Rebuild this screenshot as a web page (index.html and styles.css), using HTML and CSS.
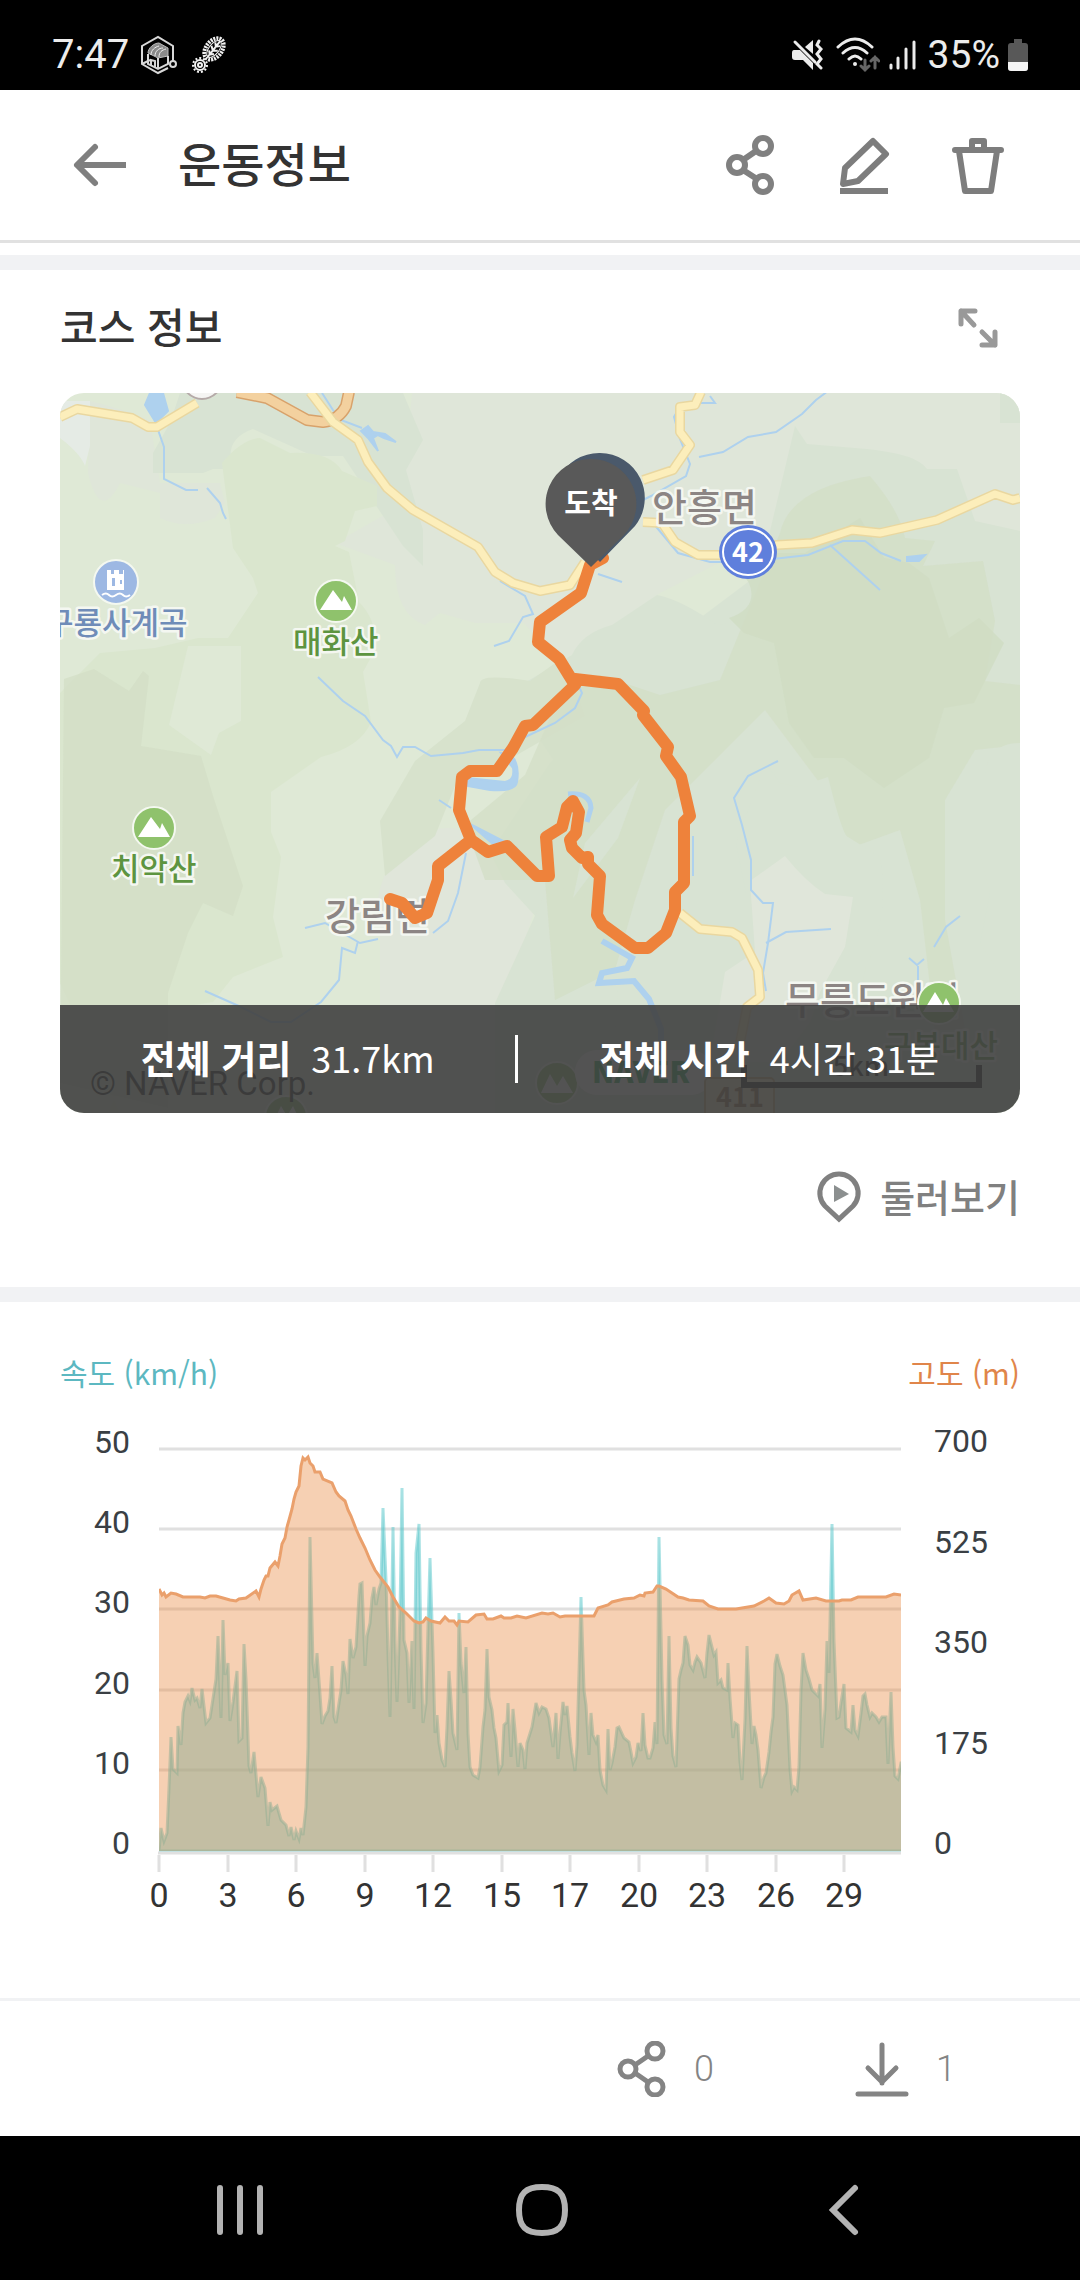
FILE: index.html
```html
<!DOCTYPE html>
<html lang="ko">
<head>
<meta charset="utf-8">
<meta name="viewport" content="width=device-width, initial-scale=1">
<title>운동정보</title>
<link rel="stylesheet" href="styles.css">
</head>
<body>
<div class="status-bar">
  <div class="status-group">
    <span class="clock">7:47</span>
    <svg class="status-app" width="38" height="40" viewBox="0 0 38 40" fill="none" stroke="#d8d8d8" stroke-width="2">
      <path d="M32 26V11L17 2 1 11v18l16 9 10-5M1 29l8-4"/>
      <path d="M7 18c0-5 6-10 11-10l9 5v8l-10 2z" fill="#8a8a8a" stroke="#bbb" stroke-width="1"/>
      <path d="M10 20c0-5 4-8 8-9M14 21c0-5 4-8 8-8M18 22c0-5 3-7 7-8" stroke="#eee" stroke-width="1"/>
      <path d="M7 19v10l10 5 10-5v-8M17 23v11M10 31v-6l4 1v6"/>
      <circle cx="32" cy="29" r="3"/>
    </svg>
    <svg class="status-app" width="38" height="40" viewBox="0 0 38 40" fill="none" stroke="#f2f2f2">
      <g transform="rotate(38 23 14)">
        <ellipse cx="23" cy="14" rx="5" ry="10" stroke-width="1"/>
        <path d="M23 4v20M20 8l3 3 3-3M19 13l4 3 4-3M20 18l3 3 3-3" stroke-width="2"/>
        <ellipse cx="23" cy="14" rx="8" ry="12" stroke-width="4" stroke-dasharray="2 1"/>
      </g>
      <circle cx="9" cy="30" r="5" stroke-width="2"/><circle cx="9" cy="30" r="7" stroke-width="2" stroke-dasharray="2 2"/><circle cx="9" cy="30" r="2" stroke-width="2"/>
    </svg>
  </div>
  <div class="status-group">
    <svg width="32" height="32" viewBox="0 0 32 32" fill="none">
      <path d="M2 11h6l13 13v7L11 21H3q-3 0-3-3v-4q0-3 2-3z" fill="#ececec"/><path d="M13 8l8-7v14z" fill="#ececec"/>
      <path d="M3 3l20 20" stroke="#ececec" stroke-width="3" stroke-linecap="round"/>
      <path d="M27 2l-2 4 4 4-4 5 4 5-4 5 4 4" stroke="#ececec" stroke-width="3" stroke-linecap="round"/>
    </svg>
    <svg class="wifi" width="44" height="36" viewBox="0 0 44 36" fill="none" stroke="#ececec" stroke-width="3" stroke-linecap="round">
      <path d="M2 10q17-16 34 0M7 16q12-11 24 0M13 22q6-6 12 0"/>
      <circle cx="19" cy="27" r="2" fill="#ececec" stroke="none"/>
      <path d="M29 23v10M25 29l4 4 4-4M39 31V20M35 24l4-4 4 4" stroke="#666"/>
    </svg>
    <svg width="28" height="32" viewBox="0 0 28 32" fill="none" stroke="#ececec" stroke-width="3" stroke-linecap="round">
      <path d="M3 26v3M10 19v10M18 10v19M26 3v26"/>
    </svg>
    <span class="battery-level">35%</span>
    <svg width="20" height="34" viewBox="0 0 20 34">
      <path d="M6 1h8v4h3q3 0 3 3v22q0 3-3 3H3q-3 0-3-3V8q0-3 3-3h3z" fill="#585858"/>
      <path d="M0 24h20v6q0 3-3 3H3q-3 0-3-3z" fill="#f4f4f4"/>
    </svg>
  </div>
</div>

<header class="app-bar">
  <button class="icon-button back" aria-label="뒤로">
    <svg width="56" height="56" viewBox="0 0 56 56" fill="none" stroke="#7f7f7f" stroke-width="6" stroke-linejoin="round"><path d="M54 28H5"/><path d="M23 10L5 28l18 18" stroke-linecap="round"/></svg>
  </button>
  <h1>운동정보</h1>
  <div class="actions">
    <button class="icon-button" aria-label="공유">
      <svg width="60" height="60" viewBox="0 0 60 60" fill="none" stroke="#808080" stroke-width="6"><circle cx="17" cy="30" r="8"/><circle cx="43" cy="11" r="8"/><circle cx="43" cy="49" r="8"/><path d="M23 25l13-9M23 35l14 9"/></svg>
    </button>
    <button class="icon-button" aria-label="편집">
      <svg width="60" height="60" viewBox="0 0 60 60" fill="none" stroke="#7d7d7d" stroke-width="6" stroke-linejoin="round"><path d="M39 6l13 13-28 27-15 3 2-16z"/><path d="M6 56h48"/></svg>
    </button>
    <button class="icon-button" aria-label="삭제">
      <svg width="60" height="60" viewBox="0 0 60 60" fill="none" stroke="#7d7d7d" stroke-width="6" stroke-linejoin="round" stroke-linecap="round"><path d="M7 15h46M11 16l6 40h26l6-40M24 14V6h12v8"/></svg>
    </button>
  </div>
</header>

<main>
  <section class="course">
    <div class="course-head">
      <h2>코스 정보</h2>
      <button class="icon-button" aria-label="지도 크게 보기">
        <svg width="44" height="44" viewBox="0 0 44 44" fill="none" stroke="#999" stroke-width="5" stroke-linecap="round" stroke-linejoin="round"><path d="M18 19L5 5M5 18V5h14"/><path d="M26 26l13 13M39 26v13H26"/></svg>
      </button>
    </div>

    <div class="map">
      <svg class="map-canvas" viewBox="0 0 960 720" role="img" aria-label="코스 지도">
        <rect width="960" height="720" fill="#dfe9d6"/>
        <g fill="#dfe6d9">
          <path d="M352 0h608v190Q860 150 735 130 640 180 600 200L500 270l-60-66-90-90-5-40z"/>
          <path d="M30 8q40 10 60 20l10 62h60l5 20-10 15q-30 12-55 0l0-25-40-10q-20 40-32-10z"/>
          <path d="M0 8h30v45l-5 20Q20 60 0 45z" fill="#e5ebe5"/>
          <path d="M345 110l90 60 40 60-60 0-35-10-15 12q-30-10-30-60l-60-22z"/>
          <path d="M320 540q-10-30 10-70 60-70 110 0l60-60-20 90-35 110v110H320z" fill="#e0e6da"/>
        </g>
        <g fill="#d8e3d3">
          <path d="M110 30L93 60v20h50l10-4h20q-10-30 20-40l60 27h30l60 90 20 20 0-36-17-60 17-30-20-47H120z"/>
          <path d="M735 33l12 18 60 5q50 5 60 20h30l18 52 45 10v582H540l-40-170-55-60-15-30 60-90 130-130 80-60z"/>
          <path d="M512 262q10-22 40-30l45-30q25 5 60 30 25-5 35-2l30 50-80 80-140 20-40-60-15-20z"/>
          <path d="M940 0h20v30h-20z"/>
          <path d="M435 720l0-110 55-120 70 30 0 200z"/>
        </g>
        <path d="M162 70q20-24 38-25l30 15q40-2 52 18l35 15v20l-22 5-10 30-10 5 14 6 10 50q20 20 15 50l-11 20 8 50q-10 25-50 35l-50 35v40l10 25-8 60 10 40-50 20-20 25-60 10-45 100H60L0 590V300l40-40 55-5 43-10h30l30-45-5-15-20-30z" fill="#dae6ce"/>
        <path d="M420 290q0-10 50-2l35-25 20 60-70 40-60 30-20 50-50 40-5-55 35-60 50-40z" fill="#d7e2cc"/>
        <path d="M128 253l53 0v75l-22 12-8 22-42-30z" fill="#dfe9d6"/>
        <g fill="#d3dfc7">
          <path d="M4 286l30-10 35 22 14-20 6 5-8 70 60 10 12 40 30 90-10 30-30-13-15 30-20 60v115L0 690z" opacity=".8"/>
          <path d="M720 140q10-45 90-57 30 35 35 62l30 3-12 25 60-5 12 60-10 60 35 4v60l-45 5-30 50v120l20 110-30 0-15-130-20-70-55 20-20-60-60-80-40 40-60 60-30 90-20 70-60 30-10-120-60 0-20-55 60-50 35-80 40-20 60 20 60-15z" opacity=".8"/>
        </g>
        <path d="M745 160l55-35 24 40 25 5 20 15 20 60 30-20 25 25-30 60-30 5-15 50-45 30-40-30h-30l-25-35-15-80-30-10-15-15q30-10 20-35-15-20-10-30z" fill="#cfdcc3" opacity=".8"/>
        <g fill="#d8e3d3">
          <path d="M706 370l14 20 18 4 30-10q15 60 20 60l32 20q10 60-14 110l-20 90-100 20-20-144 20-40-10-50z"/>
          <path d="M525 450l55-65-22 60-45 60z"/>
          <path d="M960 350q-30 0-35 30l-10 60 15 60-10 50 40 60z"/>
          <path d="M660 500l20-5 20 20v90l-40 100h-110l10-140 60-10z"/>
        </g>
        <path d="M690 488l35-25q20 25 40 38l28 3-8 50-25 45-10 30-30 40h-70l15-90 30-20z" fill="#e0e6da"/>

        <g class="river">
          <path class="lake" d="M90 0h13l5 18-12 12-11-18zM301 38l7-5 5 6 12 2 11 8-12-4-6-3-5 3 5 13-10-13z"/>
          <path class="lake" d="M408 393l22 4q26 2 27-8 3-18-6-27l-10-2 12 15q2 12-8 14l-37-4zM410 431l35 18 12 6-24-4zM847 164l18-2-6 6-12 0z"/>
          <path d="M97 34l7 20v32l22 11h12M147 95l13 15 3 10 3 6M262 0l11 17 8 10 21 8M258 284l25 24 22 15 18 24 8 6 6 11 6-10h12l16 9 32-3 16-3h30"/>
          <path d="M440 188l25 15 8 18-10 3-14 24-15 5M650 3l5 7h-33l-8 14 6 22 10 25-4 12-35 20-10 5M639 64l24-5 25-15 28-5 26-18 14-14 12-9M593 130l25 30 32 9 38 0 60-7 35-14 22 0 16 12 20 8"/>
          <path d="M770 152l50 45M538 181l24 8M515 285l7 15-7 15-20 15-32 15"/>
          <path d="M718 368l-30 15-14 22 8 27 9 35v30l12 13h10l-5 40-5 30 3 18M706 550l20-11 45-3M900 523l-14 11-12 20M849 565l8 7 7-6M858 573v14"/>
          <path stroke-width="6" d="M542 548l30 17-5 10-25 5-3 10 35-2 15 18 12 30v40"/>
          <path stroke-width="5" d="M508 401q22-2 23 14l-4 14"/>
          <path d="M406 460l-8 40-10 28-15 12M633 443v40M379 407l12 8M245 535l20-5 35 20 18-4M298 548l-3 12-13-5-3 32-18 22-30 20-20 0-30-15-36-16"/>
        </g>

        <g fill="none" stroke-linejoin="round">
          <path d="M177-1l30 6 40 22 16 2q16-2 23-16l3-14" stroke="#d8a26b" stroke-width="12"/>
          <path d="M177-1l30 6 40 22 16 2q16-2 23-16l3-14" stroke="#f3d19f" stroke-width="9"/>
          <g stroke="#e9d7a0" stroke-width="10">
            <path d="M0 24l17-8 55 9 16 9h9l40-24M250-1l23 30 25 18 10 22 19 26 26 22 65 37 17 25 18 11 27 8 30-6 15-23M583 87l30-10 17-25-10-13V14l15-2 6-13M583 129l19 1 13 19 23 13h25l54-10 35-2 40-13 28 3 57-13 58-26 18 6 7-2M620 520l20 16 32 3 10 6 16 32 2 27-13 10-7 36"/>
          </g>
          <g stroke="#fceebb" stroke-width="7">
            <path d="M0 24l17-8 55 9 16 9h9l40-24M250-1l23 30 25 18 10 22 19 26 26 22 65 37 17 25 18 11 27 8 30-6 15-23M583 87l30-10 17-25-10-13V14l15-2 6-13M583 129l19 1 13 19 23 13h25l54-10 35-2 40-13 28 3 57-13 58-26 18 6 7-2M620 520l20 16 32 3 10 6 16 32 2 27-13 10-7 36"/>
          </g>
        </g>
        <circle cx="142" cy="-14" r="20" fill="#f5f5f3" stroke="#b5aaa8" stroke-width="2"/>

        <g class="poi">
          <circle cx="56" cy="189" r="22" fill="#9db8e3"/>
          <path d="M47 177h4v4h3v-4h5v4h4v-4h1v20H47z" fill="#fff"/><path d="M52 185h3v8h-3zM60 187h2v4h-2z" fill="#9db8e3"/>
          <path d="M42 202q4-3 7 0t7 0 7 0 7 0" fill="none" stroke="#fff" stroke-width="2"/>
          <circle cx="276" cy="208" r="21" fill="#8fc26c"/><path d="M260 217l13-20 9 12 2-6 8 14z" fill="#fff"/>
          <circle cx="94" cy="435" r="21" fill="#8fc26c"/><path d="M78 444l13-20 9 12 2-6 8 14z" fill="#fff"/>
          <circle cx="497" cy="690" r="21" fill="#8fc26c"/><path d="M481 700l9-19 7 12 6-10 10 17z" fill="#fff"/>
          <circle cx="226" cy="724" r="21" fill="#8fc26c"/><path d="M212 732l9-19 6 10 6-10 9 19z" fill="#fff"/>
        </g>
        <g class="place">
          <text class="valley" x="-15" y="241">구룡사계곡</text>
          <text class="peak" x="233" y="260">매화산</text>
          <text class="peak" x="51" y="487">치악산</text>
          <text class="town" x="592" y="128">안흥면</text>
          <text class="town" x="265" y="537">강림면</text>
          <text class="town" x="725" y="621">무릉도원면</text>
          <text class="peak peak-small" x="824" y="664">구봉대산</text>
        </g>
        <g class="poi"><circle cx="879" cy="610" r="21" fill="#8fc26c"/><path d="M863 619l12-20 8 13 3-7 8 14z" fill="#fff"/></g>
        <ellipse cx="688" cy="159" rx="29" ry="27" fill="#5f7fdc"/><ellipse cx="688" cy="159" rx="25" ry="23" fill="none" stroke="#fff" stroke-width="2"/>
        <text class="route-no" x="688" y="169">42</text>

        <path class="track" d="M543 165l-13 7-9 28-41 29-2 20 21 17 16 26-42 40-8 1-12 22-16 23h-27l-8 6-3 33 12 30 17 12 19-6 30 30h12l-3-39 16-10 5-20 6-6 6 11-3 21-6 7 2 8 10 10 6-1v7l12 12-3 39 5 9 33 24h13l18-15 9-23v-18l9-9v-61l6-6-9-39-15-21 2-9-25-32 1-4-26-27-43-5M411 447l-33 26v14l-11 33-12 5-13-15-12-4"/>
        <path d="M540 60a45 45 0 0 1 35 73l-35 36-36-36a45 45 0 0 1 36-73z" fill="#4a596b"/>
        <path d="M531 66a45 45 0 0 1 33 76l-33 32-33-32a45 45 0 0 1 33-76z" fill="#595959"/>
        <text class="pin-label" x="531" y="121">도착</text>

        <rect x="515" y="657" width="138" height="45" rx="22" fill="#fff"/>
        <text class="naver" x="532" y="690">NAVER</text>
        <rect x="645" y="685" width="69" height="40" rx="4" fill="#f5e6c4" stroke="#c8ab73" stroke-width="2"/>
        <text class="road-no" x="680" y="714">411</text>
        <text class="scale" x="801" y="683">5km</text>
        <path d="M684 672v20h235v-20" fill="none" stroke="#111" stroke-width="6"/>
        <text class="copyright" x="30" y="702">© NAVER Corp.</text>
      </svg>
      <dl class="totals">
        <div class="total"><dt>전체 거리</dt><dd>31.7km</dd></div>
        <div class="total"><dt>전체 시간</dt><dd>4시간 31분</dd></div>
      </dl>
    </div>

    <button class="tour">
      <svg width="46" height="54" viewBox="0 0 46 54"><path d="M23 4a19 19 0 0 1 14 32L23 49 9 36A19 19 0 0 1 23 4z" fill="none" stroke="#808080" stroke-width="5"/><path d="M18 15l15 9-15 8z" fill="#8b8f8f"/></svg>
      <span>둘러보기</span>
    </button>
  </section>

  <section class="chart-section">
    <div class="chart-head"><span class="speed-title">속도 (km/h)</span><span class="height-title">고도 (m)</span></div>
    <svg class="chart" viewBox="0 0 960 500" role="img" aria-label="속도와 고도 그래프">
      <defs><clipPath id="plot"><rect x="0" y="0" width="742" height="403"/></clipPath></defs>
      <path class="grid" d="M99 29h742M99 109h742M99 189h742M99 270h742M99 350h742"/>
      <g transform="translate(99 29)" clip-path="url(#plot)">
        <polygon class="speed" points="0,402 2,379 5,392 8,384 10,339 12,288 14,320 18,324 19,277 22,296 24,264 26,253 29,247 31,252 33,239 36,251 38,249 41,259 43,240 47,274 51,269 53,256 57,230 59,187 62,269 64,171 66,226 69,214 71,272 74,253 78,222 80,292 83,289 85,195 87,230 90,317 92,324 95,303 99,348 102,328 106,339 109,377 111,353 113,361 118,357 122,371 127,376 130,387 132,378 135,391 137,382 140,390 142,379 144,386 147,358 149,298 151,88 154,215 156,229 158,204 161,245 163,275 166,267 169,262 171,249 173,217 175,268 177,274 180,254 182,241 184,212 187,226 189,245 191,190 194,209 197,198 200,147 201,135 203,134 206,217 208,187 211,174 213,149 215,138 217,156 220,140 222,134 224,59 227,131 229,204 231,268 234,78 236,191 238,253 241,164 243,39 245,191 248,204 250,254 253,192 255,260 257,104 260,75 262,201 264,274 267,254 269,178 271,109 274,204 276,284 278,266 280,294 283,311 286,318 288,278 290,222 292,251 294,284 298,301 300,164 302,214 305,244 307,198 309,284 311,318 314,326 319,329 321,318 324,278 326,261 328,200 330,248 333,261 335,279 337,289 340,322 343,316 345,276 348,273 349,254 352,308 354,260 356,281 359,318 361,294 364,301 366,320 368,294 373,278 377,254 380,264 383,258 387,260 390,269 392,284 394,298 397,264 399,310 401,284 404,253 406,266 408,257 411,288 413,304 416,322 418,296 420,224 422,148 425,241 427,256 430,306 432,264 434,286 437,293 439,286 441,321 444,336 447,341 449,280 451,321 453,314 456,298 458,279 460,278 465,289 470,293 472,303 474,314 477,308 479,294 482,302 484,264 486,296 489,309 491,309 494,299 496,273 498,295 500,88 503,230 505,286 508,295 510,187 512,279 514,307 517,318 520,230 522,221 524,214 526,187 529,196 531,216 534,221 536,213 538,208 542,214 546,229 548,204 550,186 553,198 555,206 557,203 559,234 562,231 564,239 568,241 569,214 571,249 574,289 576,274 579,276 581,313 583,331 586,271 588,197 590,241 593,295 595,277 597,286 599,301 602,339 605,328 607,324 610,303 612,283 614,268 616,215 618,205 621,217 624,226 626,241 628,256 631,320 633,342 635,338 638,341 640,318 642,241 644,204 647,221 650,230 653,241 659,247 661,235 663,299 666,260 668,192 670,224 673,75 675,192 678,269 680,268 682,254 685,235 687,279 692,283 694,256 696,281 699,287 702,264 704,247 706,245 708,256 711,268 713,264 717,268 720,273 723,268 727,268 729,315 732,243 734,298 736,327 739,330 742,314 745,314 745,402"/>
        <polygon class="height-area" points="0,402 0,140 3,146 5,144 7,148 12,144 17,145 24,148 41,148 46,149 51,147 57,147 64,149 71,151 77,152 80,150 87,149 97,142 100,148 102,140 105,131 107,127 109,127 111,119 116,113 119,117 121,107 123,95 126,89 128,78 130,71 133,60 135,50 137,43 140,37 142,17 144,9 146,11 149,8 151,14 154,17 156,23 161,23 164,30 173,34 177,43 180,47 186,52 189,61 192,67 197,80 201,89 206,99 211,111 216,121 221,128 229,138 234,148 240,158 247,164 255,172 260,174 264,173 267,169 272,172 281,174 286,168 290,172 295,172 298,176 300,172 309,173 317,166 325,165 328,170 334,170 342,167 345,169 352,169 358,167 367,169 383,164 389,165 394,164 401,168 406,167 417,167 435,167 439,159 449,156 453,153 465,150 475,149 481,146 485,147 486,144 494,143 496,140 498,137 500,137 507,140 519,148 524,149 530,151 544,152 550,157 559,160 577,160 595,157 605,152 610,149 617,154 625,155 630,152 633,146 640,142 644,151 657,149 667,152 680,152 683,151 692,151 699,148 710,148 727,148 735,145 742,146 742,402"/>
        <polyline class="height-line" points="0,140 3,146 5,144 7,148 12,144 17,145 24,148 41,148 46,149 51,147 57,147 64,149 71,151 77,152 80,150 87,149 97,142 100,148 102,140 105,131 107,127 109,127 111,119 116,113 119,117 121,107 123,95 126,89 128,78 130,71 133,60 135,50 137,43 140,37 142,17 144,9 146,11 149,8 151,14 154,17 156,23 161,23 164,30 173,34 177,43 180,47 186,52 189,61 192,67 197,80 201,89 206,99 211,111 216,121 221,128 229,138 234,148 240,158 247,164 255,172 260,174 264,173 267,169 272,172 281,174 286,168 290,172 295,172 298,176 300,172 309,173 317,166 325,165 328,170 334,170 342,167 345,169 352,169 358,167 367,169 383,164 389,165 394,164 401,168 406,167 417,167 435,167 439,159 449,156 453,153 465,150 475,149 481,146 485,147 486,144 494,143 496,140 498,137 500,137 507,140 519,148 524,149 530,151 544,152 550,157 559,160 577,160 595,157 605,152 610,149 617,154 625,155 630,152 633,146 640,142 644,151 657,149 667,152 680,152 683,151 692,151 699,148 710,148 727,148 735,145 742,146"/>
      </g>
      <path class="axis" d="M98 433h743M99 435v17M168 435v17M236 435v17M305 435v17M373 435v17M442 435v17M510 435v17M579 435v17M647 435v17M716 435v17M784 435v17"/>
      <g class="axis-label left"><text x="70" y="33">50</text><text x="70" y="113">40</text><text x="70" y="193">30</text><text x="70" y="274">20</text><text x="70" y="354">10</text><text x="70" y="434">0</text></g>
      <g class="axis-label"><text x="874" y="32">700</text><text x="874" y="133">525</text><text x="874" y="233">350</text><text x="874" y="334">175</text><text x="874" y="434">0</text></g>
      <g class="km-label"><text x="99" y="487">0</text><text x="168" y="487">3</text><text x="236" y="487">6</text><text x="305" y="487">9</text><text x="373" y="487">12</text><text x="442" y="487">15</text><text x="510" y="487">17</text><text x="579" y="487">20</text><text x="647" y="487">23</text><text x="716" y="487">26</text><text x="784" y="487">29</text></g>
    </svg>
  </section>
</main>

<footer class="counts">
  <button class="count" aria-label="공유 0">
    <svg width="52" height="56" viewBox="0 0 52 56" fill="none" stroke="#848484" stroke-width="5"><circle cx="12" cy="28" r="8"/><circle cx="39" cy="10" r="8"/><circle cx="39" cy="46" r="8"/><path d="M19 24l13-9M19 32l13 9"/></svg>
    <span>0</span>
  </button>
  <button class="count" aria-label="다운로드 1">
    <svg width="56" height="56" viewBox="0 0 56 56" fill="none" stroke="#848484" stroke-width="5" stroke-linecap="round" stroke-linejoin="round"><path d="M28 4v38M14 27l14 14 14-14M4 53h48"/></svg>
    <span>1</span>
  </button>
</footer>

<nav class="system-nav">
  <button aria-label="최근 앱"><svg width="60" height="60" viewBox="0 0 60 60" stroke="#b3b3b3" stroke-width="6" stroke-linecap="round"><path d="M10 8v44M30 8v44M50 8v44"/></svg></button>
  <button aria-label="홈"><svg width="60" height="60" viewBox="0 0 60 60" fill="none" stroke="#b3b3b3" stroke-width="6"><path d="M30 7C46 7 53 13 53 30S46 53 30 53 7 47 7 30 14 7 30 7z"/></svg></button>
  <button aria-label="뒤로 가기"><svg width="60" height="60" viewBox="0 0 60 60" fill="none" stroke="#b3b3b3" stroke-width="6" stroke-linecap="round"><path d="M41 8L19 30l22 22"/></svg></button>
</nav>
</body>
</html>
```

FILE: styles.css
```css
* { box-sizing: border-box; }

body {
  margin: 0;
  min-height: 100vh;
  display: flex;
  flex-direction: column;
  background: #fff;
  color: #333;
  font-family: "Noto Sans CJK KR", "Noto Sans", sans-serif;
}

svg { display: block; flex: none; }

button {
  margin: 0;
  padding: 0;
  border: 0;
  background: none;
  font-family: inherit;
  cursor: pointer;
}

h1, h2, dl, dt, dd { margin: 0; font-weight: 500; }

.status-bar {
  height: 90px;
  padding: 20px 52px 0;
  display: flex;
  align-items: center;
  justify-content: space-between;
  background: #000;
  color: #ececec;
  font: 40px/48px Roboto, sans-serif;
}

.status-group { display: flex; align-items: center; gap: 12px; }
.status-group .wifi { margin-right: -4px; }
.battery-level { font-size: 39px; margin-right: -4px; }

.app-bar {
  height: 153px;
  padding: 0 72px 0 72px;
  display: flex;
  align-items: center;
  border-bottom: 3px solid #e1e1e1;
}

.app-bar h1 { margin-left: 50px; padding-bottom: 6px; font-size: 47px; line-height: 60px; }
.actions { margin-left: auto; display: flex; gap: 54px; }

.course {
  margin-top: 12px;
  border-top: 15px solid #f1f2f4;
  padding: 0 60px;
  display: flex;
  flex-direction: column;
}

.course-head {
  height: 123px;
  padding: 0 20px 8px 0;
  display: flex;
  align-items: center;
  justify-content: space-between;
}

.course-head h2 { padding-bottom: 6px; font-size: 41px; line-height: 60px; }

.map {
  position: relative;
  overflow: hidden;
  border-radius: 24px;
}

.map-canvas { width: 100%; height: auto; }

.river path { fill: none; stroke: #aed1ee; }
.river path:not([stroke-width]) { stroke-width: 2; }
.river .lake { fill: #aed1ee; }

.poi circle { stroke: #f4f8f0; stroke-width: 2; }

.place text {
  paint-order: stroke;
  stroke: #f4f7f1;
  stroke-width: 5px;
  stroke-linejoin: round;
  font-weight: 500;
}

.place .valley { font-size: 31px; fill: #6f8cb8; }
.place .peak { font-size: 31px; fill: #5d9440; }
.place .peak-small { font-size: 31px; }
.place .town { font-size: 38px; fill: #8c8584; }

.route-no, .pin-label, .road-no, .scale { text-anchor: middle; }
.route-no { font-size: 27px; font-weight: 700; fill: #fff; }
.pin-label { font-size: 29px; font-weight: 700; fill: #fff; }
.road-no { font-size: 27px; font-weight: 700; fill: #8a6a3c; }
.scale { font-size: 27px; font-weight: 500; fill: #111; }
.naver { font-size: 29px; font-weight: 900; fill: #17a34a; }
.copyright { font-family: Roboto, sans-serif; font-size: 33px; fill: #111; }

.track {
  fill: none;
  stroke: #ee823b;
  stroke-width: 12;
  stroke-linejoin: round;
  stroke-linecap: round;
}

.totals {
  position: absolute;
  left: 0;
  right: 0;
  bottom: 0;
  height: 108px;
  display: flex;
  align-items: center;
  background: rgba(64, 64, 64, .9);
  color: #fff;
}

.total {
  flex: 1 1 auto;
  height: 48px;
  padding-bottom: 4px;
  display: flex;
  align-items: center;
  justify-content: center;
  gap: 20px;
  font-size: 38px;
  line-height: 48px;
}

.total + .total { border-left: 3px solid #fff; }
.total dt { font-weight: 700; }
.total dd { font-size: 36px; font-weight: 400; }

.tour {
  height: 174px;
  padding-bottom: 6px;
  align-self: flex-end;
  display: flex;
  align-items: center;
  gap: 18px;
  color: #808080;
  font-size: 38px;
  font-weight: 500;
}

.tour span { padding-bottom: 4px; }

.chart-section { border-top: 15px solid #f1f2f4; padding: 46px 60px 0; }

.chart-head {
  display: flex;
  justify-content: space-between;
  font-size: 30px;
  line-height: 48px;
}

.speed-title { color: #5cb8c1; }
.height-title { color: #e0854a; }

.chart { width: 100%; height: auto; margin-top: 24px; }
.grid { stroke: #e0e0e0; stroke-width: 3; }
.axis { stroke: #e0e0e0; stroke-width: 3; fill: none; }
.speed { fill: rgba(85, 197, 201, .5); stroke: rgba(85, 197, 201, .5); stroke-width: 3; }
.height-area { fill: rgba(233, 138, 65, .4); }
.height-line { fill: none; stroke: #eaa06c; stroke-width: 3; }
.axis-label { font-family: Roboto, sans-serif; font-size: 32px; fill: #3a3f44; }
.left { text-anchor: end; }
.km-label { font-family: Roboto, sans-serif; font-size: 34px; fill: #333; text-anchor: middle; }

.counts {
  height: 138px;
  margin-top: auto;
  padding: 0 124px 0 0;
  border-top: 3px solid #f1f2f4;
  display: flex;
  align-items: center;
  justify-content: flex-end;
  gap: 140px;
}

.count {
  display: flex;
  align-items: center;
  gap: 26px;
  color: #848484;
  font-family: Roboto, sans-serif;
  font-size: 36px;
  font-weight: 300;
}

.system-nav {
  height: 144px;
  padding: 4px 85px 0 89px;
  display: flex;
  background: #000;
}

.system-nav button { flex: 1; display: flex; align-items: center; justify-content: center; }
```
